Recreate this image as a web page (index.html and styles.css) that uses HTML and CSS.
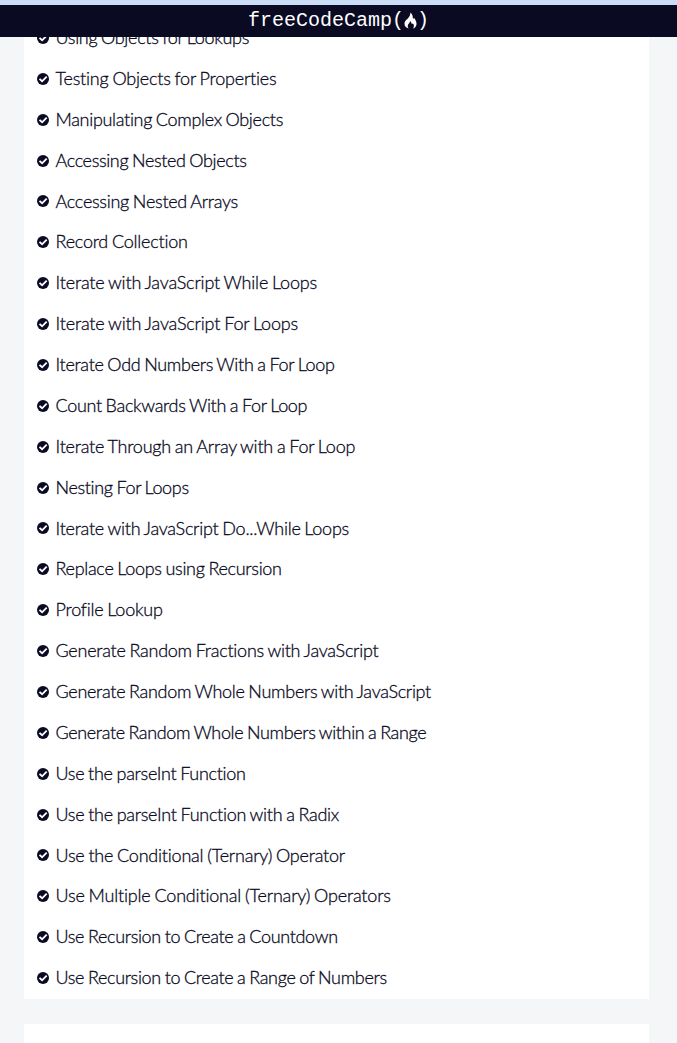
FILE: index.html
```html
<!DOCTYPE html>
<html lang="en">
<head>
<meta charset="utf-8">
<title>freeCodeCamp</title>
<link rel="stylesheet" href="styles.css">
</head>
<body>
<svg width="0" height="0" class="defs"><symbol id="check" viewBox="0 0 12 12"><circle cx="6" cy="6" r="6" fill="#0a0a23"/><path d="M2.500 5.900 5.100 8.300 9.700 3.700" fill="none" stroke="#fff" stroke-width="1.900"/></symbol></svg>
<header class="bar"><span class="logo">freeCodeCamp(</span><svg class="flame" viewBox="0 0 13 17"><path d="M6.300 0.500C8 1.500 8.800 3.500 8.800 5.500C8.800 7 9.500 7.200 10 5.800C11.500 8 12.700 10 12.500 12.300C12.300 14.500 11 16 9 16.500C10.500 14.500 10 12.500 8.700 11.300C8.500 12.500 7.700 12.300 7.500 11.200C7.300 10.200 6.800 9.500 6 9C6.200 11 4.200 11.800 3.800 13.500C3.500 14.800 4 15.800 5 16.500C2 16 0.300 14 0.500 11.500C0.700 8.500 3.500 7.500 5 5C6 3.500 6.500 2 6.300 0.500Z" fill="#fff"/></svg><span class="logo">)</span></header>
<main class="page">
<ul class="card list" id="list"></ul>
<div class="card next"></div>
</main>
<script src="list.js"></script>
</body>
</html>
```
FILE: styles.css
```css
* { box-sizing: border-box; }
body { margin: 0; height: 1043px; overflow: hidden; background: #f5f6f7; font-family: Lato, sans-serif; color: #0a0a23; }
.defs { display: block; }
.bar { height: 37px; border-top: 5px solid #cbdcf6; background: #0a0a23; color: #fff; display: flex; justify-content: center; align-items: center; padding-bottom: 2px; }
.logo { font: 20px "Liberation Mono", monospace; }
.flame { width: 13px; height: 17px; }
.page { height: 1006px; overflow: hidden; padding: 0 28px 0 24px; }
.card { background: #fff; }
.list { margin: 0; padding: 0 13px; height: 962px; overflow: hidden; list-style: none; }
.item { display: flex; align-items: center; gap: 6.500px; height: 40.875px; font-size: 18px; font-weight: 300; white-space: nowrap; word-spacing: -0.800px; font-variant-ligatures: none; -webkit-text-stroke: 0.300px #0a0a23; }
.item:first-child { margin-top: -19.550px; }
.item span { margin-top: -1.700px; }
.tick { width: 12px; height: 12px; flex: none; -webkit-text-stroke: 0; }
.next { margin-top: 25px; height: 30px; }
```
FILE: list.js
```js
// Each lesson title with the width its line is set to.
const lessons = [
  ["Using Objects for Lookups", 193.5], ["Testing Objects for Properties", 221],
  ["Manipulating Complex Objects", 227.5], ["Accessing Nested Objects", 191],
  ["Accessing Nested Arrays", 182.5], ["Record Collection", 132.2],
  ["Iterate with JavaScript While Loops", 261.5], ["Iterate with JavaScript For Loops", 242.5],
  ["Iterate Odd Numbers With a For Loop", 279.2], ["Count Backwards With a For Loop", 251.7],
  ["Iterate Through an Array with a For Loop", 299.7], ["Nesting For Loops", 133.2],
  ["Iterate with JavaScript Do...While Loops", 293.5], ["Replace Loops using Recursion", 226.2],
  ["Profile Lookup", 107.2], ["Generate Random Fractions with JavaScript", 323],
  ["Generate Random Whole Numbers with JavaScript", 375.5],
  ["Generate Random Whole Numbers within a Range", 370.7], ["Use the parseInt Function", 190.2],
  ["Use the parseInt Function with a Radix", 283.5], ["Use the Conditional (Ternary) Operator", 289.5],
  ["Use Multiple Conditional (Ternary) Operators", 335.2], ["Use Recursion to Create a Countdown", 282.2],
  ["Use Recursion to Create a Range of Numbers", 331.2]
];
const list = document.getElementById("list");
list.innerHTML = lessons.map(([t]) =>
  `<li class="item"><svg class="tick"><use href="#check"/></svg><span>${t}</span></li>`).join("");
list.querySelectorAll("span").forEach((label, i) => {
  const [title, width] = lessons[i];
  label.style.letterSpacing = (width - label.getBoundingClientRect().width) / title.length + "px";
});
```
